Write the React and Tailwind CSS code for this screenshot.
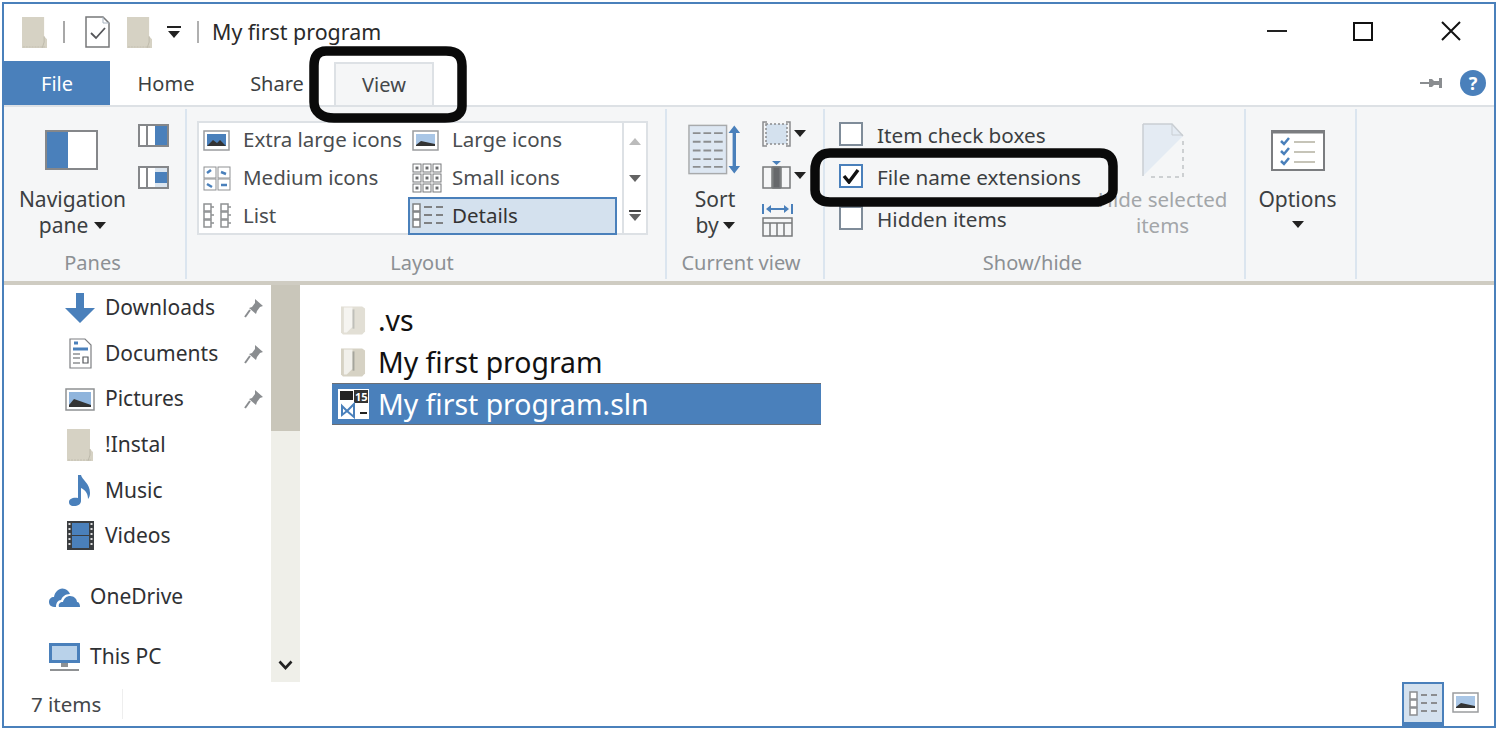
import React from "react";

const BLUE = "#4a80bb";
const TAN = "#d6d2c4";

// Little drawings used around the ribbon
const PlainFolder = ({ className }) => (
  <svg className={className} viewBox="0 0 26 32">
    <path d="M0 0h23v20l3 3v9H0z" fill={TAN} />
    <path d="M23 20v6l-2 6" stroke="#bdb9ab" fill="none" />
    <path d="M1 31h24" stroke="#c4c0b2" strokeDasharray="2 1" />
  </svg>
);

const CheckDoc = () => (
  <svg className="w-[25px] h-[32px]" viewBox="0 0 25 32" fill="none">
    <path d="M1 1h17l6 6v24H1z" fill="#fff" stroke="#77787a" strokeWidth="1.5" />
    <path d="M18 1v6h6" stroke="#a9b4c0" />
    <path d="M6 17l5 5 9-10" stroke="#55565a" strokeWidth="1.8" />
  </svg>
);

const Caret = ({ className = "" }) => (
  <svg className={className} width="12" height="7" viewBox="0 0 12 7">
    <path d="M0 0h12L6 7z" fill="#222" />
  </svg>
);

const Pin = () => (
  <svg className="w-[20px] h-[20px]" viewBox="0 0 20 20" fill="#8a8d90">
    <path d="M11 1l8 7-3 1-3 4-1 3-7-6 3-1 3-4z" />
    <path d="M6 12L1 19" stroke="#8a8d90" strokeWidth="2" />
  </svg>
);

const SmallViewIcon = ({ type }) => {
  if (type === "xl") {
    return (
      <svg className="w-[27px] h-[21px]" viewBox="0 0 27 21">
        <rect x="1" y="1" width="25" height="19" fill="#fff" stroke="#9a9c9e" strokeWidth="1.5" />
        <rect x="4" y="4" width="19" height="12" fill={BLUE} />
        <path d="M4 16l6-6 4 3 3-3 6 6z" fill="#333" />
      </svg>
    );
  }
  if (type === "large") {
    return (
      <svg className="w-[27px] h-[21px]" viewBox="0 0 27 21">
        <rect x="1" y="1" width="25" height="19" fill="#fff" stroke="#9a9c9e" strokeWidth="1.5" />
        <rect x="4" y="4" width="19" height="12" fill="#a9c6e6" />
        <path d="M4 15l5-4 14 3v2H4z" fill="#333" />
      </svg>
    );
  }
  if (type === "medium") {
    return (
      <svg className="w-[28px] h-[25px]" viewBox="0 0 28 25" fill="#fff" stroke="#8f9193">
        <rect x="1" y="1" width="12" height="11" />
        <rect x="15" y="1" width="12" height="11" />
        <rect x="1" y="13" width="12" height="11" />
        <rect x="15" y="13" width="12" height="11" />
        <path d="M4 7l4-3M18 6l5 2M4 18l5 3M18 19l6 0" stroke={BLUE} strokeWidth="2.5" />
      </svg>
    );
  }
  if (type === "small") {
    return (
      <svg className="w-[30px] h-[30px]" viewBox="0 0 30 30" fill="#fff" stroke="#77797b">
        {[0, 1, 2].map((r) =>
          [0, 1, 2].map((c) => (
            <g key={`${r}-${c}`}>
              <rect x={1 + c * 10} y={1 + r * 10} width="8" height="8" />
              <rect x={4 + c * 10} y={4 + r * 10} width="2" height="2" fill="#444" />
            </g>
          ))
        )}
      </svg>
    );
  }
  if (type === "list") {
    return (
      <svg className="w-[30px] h-[26px]" viewBox="0 0 30 26" fill="none" stroke="#8f9193" strokeWidth="1.5">
        {[1, 18].map((x) => (
          <g key={x}>
            <rect x={x} y="1" width="7" height="7" />
            <rect x={x} y="9" width="7" height="7" />
            <rect x={x} y="17" width="7" height="7" />
            <path d={`M${x + 7} 4h3M${x + 7} 12h3M${x + 7} 20h3`} />
          </g>
        ))}
      </svg>
    );
  }
  return (
    <svg className="w-[32px] h-[26px]" viewBox="0 0 32 26" fill="none" stroke="#7f8183" strokeWidth="1.5">
      <rect x="1" y="1" width="7" height="7" fill="#fff" />
      <rect x="1" y="9" width="7" height="7" fill="#fff" />
      <rect x="1" y="17" width="7" height="7" fill="#fff" />
      <path d="M12 4h8M24 4h7M12 12h8M24 12h7M12 20h8M24 20h7" strokeWidth="2" />
    </svg>
  );
};

const GalleryItem = ({ type, label, selected }) => (
  <div
    className={`flex items-center h-[38px] w-[209px] ${
      selected ? "bg-[#d4e1ee] border-2 border-[#4a80bb]" : ""
    }`}
  >
    <div className={`flex shrink-0 ${selected ? "w-[42px] pl-[2px]" : "w-[44px] pl-[4px]"}`}>
      <SmallViewIcon type={type} />
    </div>
    <span className={`text-[20.5px] -mt-[2px] whitespace-nowrap ${selected ? "text-[#333]" : "text-[#4a4d50]"}`}>{label}</span>
  </div>
);

const CheckRow = ({ label, checked }) => (
  <div className="flex items-center h-[24px] gap-[14px]">
    <div
      className={`w-[24px] h-[24px] flex items-center justify-center border-2 bg-white ${
        checked ? "border-[#4a80bb]" : "border-[#7f8c99]"
      }`}
    >
      {checked && (
        <svg className="w-[18px] h-[16px]" viewBox="0 0 18 16" fill="none">
          <path d="M2 8l5 6L16 2" stroke="#111" strokeWidth="3.4" />
        </svg>
      )}
    </div>
    <span className="text-[20.7px] pt-[3px] text-[#3c3f42] whitespace-nowrap">{label}</span>
  </div>
);

const RibbonGroup = ({ width, label, children, labelClass = "" }) => (
  <div className={`${width} shrink-0 h-full flex flex-col border-r-2 border-[#dbe5ef]`}>
    <div className="h-[142px] flex">{children}</div>
    <div className={`text-center text-[20px] leading-[24px] text-[#8c9094] ${labelClass}`}>{label}</div>
  </div>
);

const ArrowDownIcon = () => (
  <svg className="w-[30px] h-[30px]" viewBox="0 0 30 30">
    <path d="M11 0h8v15h11L15 30 0 15h11z" fill={BLUE} />
  </svg>
);

const DocumentsIcon = () => (
  <svg className="w-[23px] h-[31px]" viewBox="0 0 23 31" fill="#fff" stroke="#7d7f82" strokeWidth="1.2">
    <path d="M1 1h15l6 6v23H1z" />
    <path d="M5 5l4 0M4 11h15" stroke={BLUE} strokeWidth="3" />
    <path d="M4 16h7M4 20h7M4 25h7M14 19h5v6h-5z" stroke="#55585c" />
  </svg>
);

const PicturesIcon = () => (
  <svg className="w-[30px] h-[23px]" viewBox="0 0 30 23">
    <rect x="1" y="1" width="28" height="21" fill="#fff" stroke="#8f9193" strokeWidth="1.5" />
    <rect x="4" y="4" width="22" height="15" fill="#8fb4dc" />
    <path d="M4 17l5-6 17 6v2H4z" fill="#333" />
  </svg>
);

const MusicIcon = () => (
  <svg className="w-[22px] h-[31px]" viewBox="0 0 22 31" fill={BLUE}>
    <path d="M9 0h3c1 5 9 8 9 18 0 3-1 5-2 6 0-6-3-9-7-11v13c0 3-3 5-7 5-4 0-5-2-5-4 0-3 4-5 9-4z" />
  </svg>
);

const VideosIcon = () => (
  <svg className="w-[27px] h-[29px]" viewBox="0 0 27 29">
    <rect width="27" height="29" fill="#3a3d40" />
    <rect x="5" y="2" width="17" height="12" fill={BLUE} />
    <rect x="5" y="15" width="17" height="12" fill={BLUE} />
    <path d="M1.5 3h2M1.5 8h2M1.5 13h2M1.5 18h2M1.5 23h2M23.5 3h2M23.5 8h2M23.5 13h2M23.5 18h2M23.5 23h2" stroke="#ddd" strokeWidth="2" />
  </svg>
);

const CloudIcon = () => (
  <svg className="w-[31px] h-[20px]" viewBox="0 0 31 20" fill={BLUE}>
    <path d="M7 20C2 20 0 18 0 15c0-3 2-5 5-5 1-6 6-10 11-8 3 1 4 3 5 5-5 0-8 3-9 6-3 0-5 3-5 7z" />
    <path d="M10 20c-1-3 1-5 4-5 1-4 4-6 7-6 4 0 7 3 7 6 2 0 3 2 3 5z" />
  </svg>
);

const MonitorIcon = () => (
  <svg className="w-[31px] h-[29px]" viewBox="0 0 31 29">
    <rect x="0" y="0" width="31" height="20" fill={BLUE} />
    <rect x="3" y="3" width="25" height="14" fill="#b9d2ea" />
    <path d="M12 20h7v4h-7z" fill="#8f9193" />
    <path d="M1 27h29" stroke="#8f9193" strokeWidth="2" />
  </svg>
);

const navRows = [
  { label: "Downloads", icon: <ArrowDownIcon />, pinned: true },
  { label: "Documents", icon: <DocumentsIcon />, pinned: true },
  { label: "Pictures", icon: <PicturesIcon />, pinned: true },
  { label: "!Instal", icon: <PlainFolder className="w-[26px] h-[32px]" /> },
  { label: "Music", icon: <MusicIcon /> },
  { label: "Videos", icon: <VideosIcon /> },
];

const FolderOpen = ({ className }) => (
  <svg className={className} viewBox="0 0 26 30">
    <path d="M0 1h22l3 2v24l-3 3H2l-2-2z" fill={TAN} />
    <path d="M3 2h9v20l-6 6H3z" fill="#f1f0eb" />
    <path d="M13 4v20" stroke="#a5a59d" strokeWidth="2" />
  </svg>
);

const SlnIcon = () => (
  <svg className="w-[31px] h-[30px]" viewBox="0 0 31 30">
    <rect width="31" height="30" fill="#fff" />
    <rect x="2" y="2" width="13" height="9" fill="#222" />
    <rect x="16" y="1" width="14" height="13" fill="#333" />
    <text x="17" y="12" fontSize="11" fontWeight="700" fill="#fff" fontFamily="Noto Sans">15</text>
    <path d="M4 17l5 5 7-7v13l-7-6-5 4z" fill="none" stroke="#4a80bb" strokeWidth="2" />
    <path d="M22 24h7" stroke="#222" strokeWidth="2" />
  </svg>
);

// The hand-drawn black loops are annotations on top of the window
const Annotations = () => (
  <svg className="absolute left-0 top-0 w-[1500px] h-[732px] pointer-events-none z-20" viewBox="0 0 1500 732" fill="none">
    <path
      d="M326 51H446C457 51 462 56 462 66V106C462 114 456 118 445 118H334C322 118 314 112 314 102V66C314 56 318 51 326 51Z"
      stroke="#0a0a0a"
      strokeWidth="9.5"
    />
    <path
      d="M830 153H1100C1109 153 1113 158 1113 166V190C1113 197 1107 199 1098 202H830C820 202 815 197 815 190V170C815 160 820 153 830 153Z"
      stroke="#0a0a0a"
      strokeWidth="9.5"
    />
  </svg>
);

const App = () => {
  return (
    <div className="relative w-[1500px] h-[732px] bg-white pl-[2px] pt-[2px] font-['Noto_Sans','Open_Sans',sans-serif] overflow-hidden">
      <Annotations />
      <div className="w-[1494px] h-[726px] border-2 border-[#4a80bb] flex flex-col">
        {/* title bar */}
        <div className="h-[57px] shrink-0 flex items-center pl-[18px] pb-[1px]">
          <PlainFolder className="w-[25px] h-[31px]" />
          <div className="w-[2px] h-[22px] bg-[#a8a8a8] ml-[16px]" />
          <div className="ml-[20px]"><CheckDoc /></div>
          <PlainFolder className="w-[25px] h-[31px] ml-[17px]" />
          <div className="ml-[15px] flex flex-col items-center gap-[3px]">
            <div className="w-[14px] h-[2px] bg-[#222]" />
            <Caret />
          </div>
          <div className="w-[2px] h-[22px] bg-[#b0b0b0] ml-[16px]" />
          <span className="ml-[13px] text-[21.4px] text-[#2a2a2a]">My first program</span>
          <div className="ml-auto flex items-center pr-[33px] pb-[2px]">
            <div className="w-[20px] h-[2px] bg-[#222]" />
            <div className="ml-[66px] w-[20px] h-[19px] border-2 border-[#111]" />
            <svg className="ml-[68px] w-[20px] h-[20px]" viewBox="0 0 20 20" stroke="#111" strokeWidth="2">
              <path d="M1 1l18 18M19 1L1 19" />
            </svg>
          </div>
        </div>

        {/* tabs */}
        <div className="h-[44px] shrink-0 flex items-end">
          <div className="w-[106px] h-[44px] pt-[2px] bg-[#4a80bb] text-white text-[20px] flex items-center justify-center">File</div>
          <div className="w-[112px] h-[44px] pt-[2px] text-[20px] text-[#3c3f42] flex items-center justify-center">Home</div>
          <div className="w-[110px] h-[44px] pt-[2px] text-[20px] text-[#3c3f42] flex items-center justify-center">Share</div>
          <div className="ml-[2px] w-[100px] h-[43px] bg-[#f5f6f7] border-2 border-b-0 border-[#dde1e5] text-[20px] text-[#44474a] flex items-center justify-center">View</div>
          <div className="ml-auto flex items-center pr-[8px] pb-[9px] gap-[17px]">
            <svg className="w-[23px] h-[12px]" viewBox="0 0 23 12" fill="#8a8d90">
              <path d="M0 5h9v2H0zM9 2h3l2 2h5V1h3v10h-3V8h-5l-2 2H9z" />
            </svg>
            <div className="w-[26px] h-[26px] rounded-full bg-[#4a80bb] text-white text-[18px] font-bold leading-[26px] text-center">?</div>
          </div>
        </div>

        {/* ribbon */}
        <div className="h-[180px] shrink-0 bg-[#f5f6f7] border-t-2 border-[#dde1e5] border-b-4 border-b-[#cfccc2] flex pt-[2px] pb-[2px]">
          <RibbonGroup width="w-[183px]" label="Panes" labelClass="pr-[4px]">
            <div className="w-[134px] flex flex-col items-center pt-[21px]">
              <div className="w-[53px] h-[40px] border-2 border-[#85878a] flex bg-white">
                <div className="w-[21px] bg-[#4a80bb]" />
              </div>
              <div className="mt-[16px] ml-[3px] text-[21px] leading-[26px] text-[#3c3f42] text-center">
                Navigation
                <div className="flex items-center justify-center gap-[6px]">pane <Caret /></div>
              </div>
            </div>
            <div className="flex flex-col pt-[15px] gap-[19px]">
              <div className="w-[31px] h-[23px] border-2 border-[#85878a] bg-white flex justify-end">
                <div className="w-[2px] bg-[#85878a] mr-[7px]" />
                <div className="w-[12px] bg-[#4a80bb]" />
              </div>
              <div className="w-[31px] h-[23px] border-2 border-[#85878a] bg-white flex justify-end">
                <div className="w-[2px] bg-[#85878a] mr-[7px]" />
                <div className="w-[12px] bg-[#4a80bb] border-y-4 border-[#dbe5ef]" />
              </div>
            </div>
          </RibbonGroup>

          <RibbonGroup width="w-[480px]" label="Layout" labelClass="pr-[8px]">
            <div className="ml-[10px] mt-[12px] w-[451px] h-[114px] border-2 border-[#dde1e5] bg-white flex">
              <div className="w-[423px] -mt-[2px] flex flex-wrap content-start">
                <GalleryItem type="xl" label="Extra large icons" />
                <GalleryItem type="large" label="Large icons" />
                <GalleryItem type="medium" label="Medium icons" />
                <GalleryItem type="small" label="Small icons" />
                <GalleryItem type="list" label="List" />
                <GalleryItem type="details" label="Details" selected />
              </div>
              <div className="w-[24px] border-l-2 border-[#dde1e5] flex flex-col items-center">
                <div className="h-[37px] flex items-center"><Caret className="rotate-180 opacity-30" /></div>
                <div className="h-[38px] flex items-center"><Caret className="opacity-70" /></div>
                <div className="h-[36px] flex flex-col items-center justify-center gap-[2px]">
                  <div className="w-[12px] h-[2px] bg-[#444]" />
                  <Caret className="opacity-70" />
                </div>
              </div>
            </div>
          </RibbonGroup>

          <RibbonGroup width="w-[158px]" label="Current view" labelClass="pr-[8px]">
            <div className="w-[95px] flex flex-col items-center pt-[15px] pl-[21px] pr-[20px]">
              <svg className="w-[54px] h-[51px] shrink-0" viewBox="0 0 56 52">
                <rect x="1" y="1" width="39" height="50" fill="#dde7f2" stroke="#a8aaac" strokeWidth="1.5" />
                {[9, 18, 27, 36, 44].map((y) => (
                  <path key={y} d={`M5 ${y}h8M16 ${y}h8M27 ${y}h9`} stroke="#8c8e90" strokeWidth="2" />
                ))}
                <path d="M48 6v40" stroke={BLUE} strokeWidth="3.5" />
                <path d="M42 9l6-8 6 8zM42 43l6 8 6-8z" fill={BLUE} />
              </svg>
              <div className="mt-[11px] text-[21px] leading-[26px] text-[#3c3f42] text-center whitespace-nowrap">
                Sort
                <div className="flex items-center justify-center gap-[4px]">by <Caret /></div>
              </div>
            </div>
            <div className="flex flex-col pt-[11px] items-start">
              <div className="flex items-center gap-[3px] h-[27px]">
                <svg className="w-[29px] h-[26px]" viewBox="0 0 29 26" fill="none" stroke="#8a8c8f" strokeWidth="1.5">
                  <rect x="4" y="3" width="21" height="20" fill="#d4e1ee" strokeDasharray="2 2" />
                  <path d="M5 1H1v24h4M24 1h4v24h-4" />
                </svg>
                <Caret />
              </div>
              <div className="flex items-center gap-[3px] h-[28px] mt-[14px]">
                <svg className="w-[29px] h-[28px]" viewBox="0 0 29 28" fill="none" stroke="#77797b" strokeWidth="1.5">
                  <rect x="1" y="6" width="27" height="21" />
                  <path d="M10 6v21M19 6v21" />
                  <rect x="11" y="6" width="7" height="21" fill="#66686b" />
                  <path d="M10 0h9l-4.500 4z" fill={BLUE} stroke="none" />
                </svg>
                <Caret />
              </div>
              <svg className="w-[31px] h-[33px] mt-[15px]" viewBox="0 0 31 33" fill="none">
                <path d="M1 0v10M30 0v10" stroke={BLUE} strokeWidth="2" />
                <path d="M6 5h19" stroke={BLUE} strokeWidth="2" />
                <path d="M9 1L4 5l5 4zM22 1l5 4-5 4z" fill={BLUE} />
                <rect x="1" y="14" width="29" height="18" stroke="#77797b" strokeWidth="1.5" />
                <path d="M1 19h29M8 19v13M15 19v13M22 19v13" stroke="#77797b" strokeWidth="1.5" />
              </svg>
            </div>
          </RibbonGroup>

          <RibbonGroup width="w-[421px]" label="Show/hide" labelClass="pr-[4px]">
            <div className="ml-[14px] pt-[13px] flex flex-col gap-[18px] w-[269px] shrink-0">
              <CheckRow label="Item check boxes" />
              <CheckRow label="File name extensions" checked />
              <CheckRow label="Hidden items" />
            </div>
            <div className="w-[105px] flex flex-col items-center pt-[14px] pl-[8px] -ml-[2px]">
              <svg className="w-[42px] h-[56px] shrink-0" viewBox="0 0 42 56" fill="none">
                <path d="M1 1h29l11 12L1 53z" fill="#e4ebf3" />
                <path d="M1 1h29l11 12M1 1v52" stroke="#c9ced3" strokeWidth="1.5" />
                <path d="M41 18v36H6" stroke="#c0c3c6" strokeWidth="1.5" strokeDasharray="4 4" />
                <path d="M30 1v11h11" stroke="#c9ced3" />
              </svg>
              <div className="mt-[7px] text-[20.5px] leading-[26px] text-[#a3a6a9] text-center whitespace-nowrap">
                Hide selected
                <div>items</div>
              </div>
            </div>
          </RibbonGroup>

          <RibbonGroup width="w-[111px]" label="">
            <div className="w-full flex flex-col items-center pt-[21px] pr-[6px]">
              <svg className="w-[54px] h-[41px] shrink-0" viewBox="0 0 54 41" fill="#fff">
                <rect x="1" y="1" width="52" height="39" stroke="#7b7d80" strokeWidth="2" />
                <path d="M1 2h52" stroke="#7b7d80" strokeWidth="3" />
                {[11, 21, 31].map((y) => (
                  <g key={y}>
                    <path d={`M10 ${y}l3 3 5-6`} fill="none" stroke={BLUE} strokeWidth="2.500" />
                    <path d={`M23 ${y + 1}h21`} stroke="#c6c4b8" strokeWidth="2" />
                  </g>
                ))}
              </svg>
              <div className="mt-[15px] text-[21px] leading-[26px] text-[#3c3f42]">Options</div>
              <Caret className="mt-[9px]" />
            </div>
          </RibbonGroup>
        </div>

        {/* content */}
        <div className="flex-1 flex min-h-0">
          <div className="w-[267px] shrink-0 pt-[2px] flex flex-col gap-[3.6px]">
            {navRows.map((row) => (
              <div key={row.label} className="h-[42px] shrink-0 flex items-center text-[21px] text-[#2f3134]">
                <div className="w-[101px] pl-[60px] flex justify-start shrink-0">
                  <div className="w-[32px] flex justify-center">{row.icon}</div>
                </div>
                <span className="flex-1">{row.label}</span>
                {row.pinned && <div className="pr-[7px]"><Pin /></div>}
              </div>
            ))}
            <div className="h-[42px] mt-[15px] flex items-center text-[21px] text-[#2f3134]">
              <div className="w-[86px] pl-[45px] shrink-0"><CloudIcon /></div>
              <span>OneDrive</span>
            </div>
            <div className="h-[42px] mt-[15px] flex items-center text-[21px] text-[#2f3134]">
              <div className="w-[86px] pl-[45px] shrink-0"><MonitorIcon /></div>
              <span>This PC</span>
            </div>
          </div>

          <div className="w-[29px] shrink-0 bg-[#efefe9] flex flex-col h-[397px]">
            <div className="h-[146px] bg-[#c9c6ba]" />
            <div className="mt-auto h-[34px] flex items-center justify-center">
              <svg className="w-[15px] h-[10px]" viewBox="0 0 15 10" fill="none">
                <path d="M1.500 1.500L7.500 8l6-6.500" stroke="#222" strokeWidth="2.600" />
              </svg>
            </div>
          </div>

          <div className="ml-[32px] pt-[14px] flex flex-col">
            <div className="h-[42px] flex items-center pl-[9px] gap-[12px] w-[489px] text-[28.4px] text-[#111]">
              <FolderOpen className="w-[25px] h-[30px] opacity-70" />
              <span>.vs</span>
            </div>
            <div className="h-[42px] flex items-center pl-[9px] gap-[12px] w-[489px] text-[28.4px] text-[#111]">
              <FolderOpen className="w-[25px] h-[30px]" />
              <span>My first program</span>
            </div>
            <div className="h-[42px] flex items-center pl-[6px] gap-[9px] w-[489px] text-[28.4px] text-white bg-[#4a80bb] border-y border-[#6b6e74]">
              <SlnIcon />
              <span>My first program.sln</span>
            </div>
          </div>
        </div>

        {/* status bar */}
        <div className="h-[44px] shrink-0 flex items-center text-[20.5px] text-[#44474a]">
          <span className="pl-[27px] w-[118px]">7 items</span>
          <div className="w-px h-[30px] bg-[#eeeeee]" />
          <div className="ml-auto flex items-end h-full pr-[15px]">
            <div className="w-[42px] h-[44px] bg-[#d4e1ee] border-x-2 border-t-2 border-b-[4px] border-[#4a80bb] flex items-center justify-center">
              <svg className="w-[32px] h-[26px]" viewBox="0 0 32 26" fill="none" stroke="#8b8d90" strokeWidth="1.5">
                <rect x="3" y="2" width="7" height="7" fill="#fff" />
                <rect x="3" y="10" width="7" height="7" fill="#fff" />
                <rect x="3" y="18" width="7" height="7" fill="#fff" />
                <path d="M14 5h6M24 5h6M14 13h6M24 13h6M14 21h6M24 21h6" strokeWidth="2" />
              </svg>
            </div>
            <div className="ml-[8px] mb-[13px]">
              <SmallViewIcon type="large" />
            </div>
          </div>
        </div>
      </div>
    </div>
  );
};

export default App;
